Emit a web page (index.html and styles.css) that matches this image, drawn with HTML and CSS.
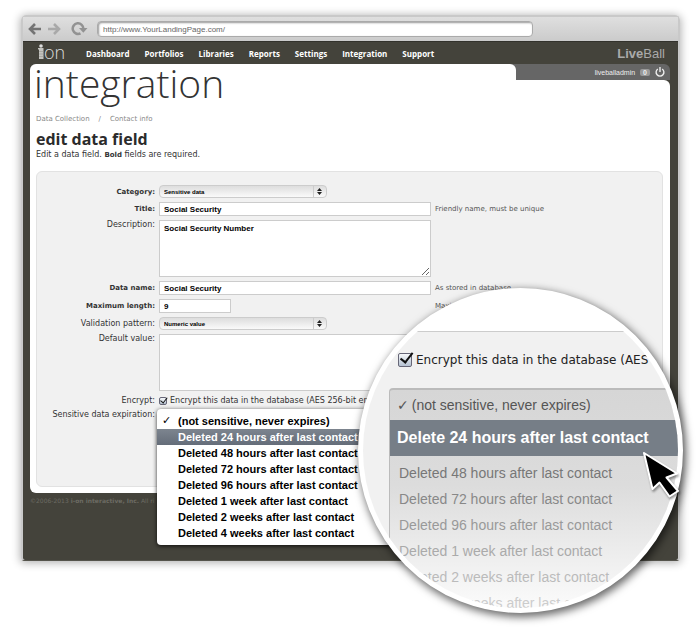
FILE: index.html
```html
<!DOCTYPE html>
<html lang="en">
<head>
<meta charset="utf-8">
<title>integration – edit data field</title>
<link rel="stylesheet" href="styles.css">
</head>
<body>
<div class="window">
  <div class="toolbar">
    <button class="tool" aria-label="Back"><svg width="14" height="12" viewBox="0 0 14 12"><path d="M7 1 2 6l5 5M2.500 6H13" fill="none" stroke="#747474" stroke-width="2.600"/></svg></button>
    <button class="tool" aria-label="Forward"><svg width="14" height="12" viewBox="0 0 14 12"><path d="m7 1 5 5-5 5M11.500 6H1" fill="none" stroke="#a9a9a9" stroke-width="2.600"/></svg></button>
    <button class="tool reload" aria-label="Reload"><svg width="17" height="14" viewBox="0 0 17 14"><path d="M9.500 11.300A5.300 5.300 0 1 1 12.300 7" fill="none" stroke="#929292" stroke-width="2.500"/><path d="M8 6h8.500l-4.200 4.800z" fill="#929292"/></svg></button>
    <input class="address" type="text" aria-label="Address" value="http://www.YourLandingPage.com/">
  </div>
  <div class="app">
    <header class="nav">
      <a class="ion" href="#"><svg width="6" height="15" viewBox="0 0 6 15"><circle cx="3" cy="2" r="1.800" fill="#ddd"/><path d="M0 4h5.500v11H1V5.500H0z" fill="#c4c4c0"/><path d="M1 7.500h4.500M1 10h4.500M1 12.500h4.500" stroke="#99988f" stroke-width=".6"/></svg><span>on</span></a>
      <nav class="links">
        <a href="#">Dashboard</a><a href="#">Portfolios</a><a href="#">Libraries</a><a href="#">Reports</a><a href="#">Settings</a><a href="#">Integration</a><a href="#">Support</a>
      </nav>
      <div class="liveball"><b>Live</b>Ball</div>
    </header>
    <div class="tabs">
      <div class="tab"></div>
      <div class="user">
        <span>liveballadmin</span><span class="count">0</span>
        <button class="tool" aria-label="Log out"><svg width="10" height="10" viewBox="0 0 10 10"><path d="M2.800 2A3.900 3.900 0 1 0 7.200 2M5 0v5" fill="none" stroke="#eee" stroke-width="1.400"/></svg></button>
      </div>
    </div>
    <main class="sheet">
      <h1>integration</h1>
      <p class="crumbs"><a href="#">Data Collection</a><span>/</span><a href="#">Contact info</a></p>
      <h2>edit data field</h2>
      <p class="intro">Edit a data field. <b>Bold</b> fields are required.</p>
      <form class="form">
        <label class="req" for="category">Category:</label>
        <div class="pick"><select id="category"><option>Sensitive data</option></select><svg width="5" height="7" viewBox="0 0 5 7"><path d="M0 3 2.500 0 5 3zM0 4h5L2.500 7z" fill="#222"/></svg></div>
        <span></span>

        <label class="req" for="title">Title:</label>
        <input id="title" type="text" value="Social Security">
        <span class="hint">Friendly name, must be unique</span>

        <label class="top" for="description">Description:</label>
        <textarea id="description" class="resizable">Social Security Number</textarea>
        <span></span>

        <label class="req" for="dataname">Data name:</label>
        <input id="dataname" type="text" value="Social Security">
        <span class="hint">As stored in database</span>

        <label class="req" for="maxlength">Maximum length:</label>
        <input id="maxlength" class="short" type="text" value="9">
        <span class="hint">Maximum</span>

        <label for="pattern">Validation pattern:</label>
        <div class="pick"><select id="pattern"><option>Numeric value</option></select><svg width="5" height="7" viewBox="0 0 5 7"><path d="M0 3 2.500 0 5 3zM0 4h5L2.500 7z" fill="#222"/></svg></div>
        <span></span>

        <label class="top" for="default">Default value:</label>
        <textarea id="default"></textarea>
        <span></span>

        <label for="encrypt">Encrypt:</label>
        <div class="check"><input id="encrypt" type="checkbox" checked><label for="encrypt">Encrypt this data in the database (AES 256-bit encr</label></div>
        <span></span>

        <span class="caption" id="expiration">Sensitive data expiration:</span>
        <div class="anchor">
          <ul class="menu" role="listbox" aria-labelledby="expiration">
            <li role="option" aria-selected="true"><i>✓</i>(not sensitive, never expires)</li>
            <li role="option" class="active">Deleted 24 hours after last contact</li>
            <li role="option">Deleted 48 hours after last contact</li>
            <li role="option">Deleted 72 hours after last contact</li>
            <li role="option">Deleted 96 hours after last contact</li>
            <li role="option">Deleted 1 week after last contact</li>
            <li role="option">Deleted 2 weeks after last contact</li>
            <li role="option">Deleted 4 weeks after last contact</li>
          </ul>
        </div>
      </form>
    </main>
    <footer>©2006-2013 <b>i-on interactive, Inc.</b> All ri</footer>
  </div>

  <div class="lens">
    <div class="lens-body">
      <div class="lens-check"><input id="encrypt-zoom" type="checkbox" checked><label for="encrypt-zoom">Encrypt this data in the database (AES</label></div>
      <ul class="lens-menu" role="listbox" aria-label="Sensitive data expiration, magnified">
        <li role="option" class="first" aria-selected="true"><i>✓</i>(not sensitive, never expires)</li>
        <li role="option" class="active">Delete 24 hours after last contact</li>
        <li role="option">Deleted 48 hours after last contact</li>
        <li role="option">Deleted 72 hours after last contact</li>
        <li role="option">Deleted 96 hours after last contact</li>
        <li role="option">Deleted 1 week after last contact</li>
        <li role="option">Deleted 2 weeks after last contact</li>
        <li role="option">Deleted 4 weeks after last contact</li>
      </ul>
    </div>
  </div>
  <svg class="cursor" width="40" height="50" viewBox="0 0 40 50"><path d="M2 2 35 22.500 24.500 26.500 36 40 27.500 45.500 17.500 31.500 10.500 38z" fill="#000" stroke="#fff" stroke-width="2" stroke-linejoin="round"/></svg>
</div>
</body>
</html>
```
FILE: styles.css
```css
* { box-sizing: border-box; }

body {
  margin: 0;
  padding: 15px 20px 68px 21px;
  background: #fff;
  color: #333;
  font-family: "DejaVu Sans", sans-serif;
  font-size: 7px;
  overflow: hidden;
}

a { color: inherit; text-decoration: none; }
ul { list-style: none; margin: 0; padding: 0; }
h1, h2, p { margin: 0; }
i { font-style: normal; }

.window {
  position: relative;
  border: 2px solid #c9c9c9;
  border-bottom: 1px solid #55544c;
  border-radius: 5px 5px 3px 3px;
  box-shadow: 0 1px 9px 1px rgba(0, 0, 0, .3);
}

.toolbar {
  display: flex;
  align-items: center;
  gap: 5px;
  height: 24px;
  padding: 0 145px 0 5px;
  background: linear-gradient(#dfdfdf, #cbcbcb);
}
.tool {
  display: flex;
  padding: 0;
  border: 0;
  background: none;
}
.reload { margin: 0 4px 0 5px; }
.address {
  flex: 1;
  min-width: 0;
  height: 16px;
  padding: 0 5px;
  border: 1px solid #aaa;
  border-radius: 4px;
  background: #fff;
  box-shadow: inset 1px 1px 2px #999;
  color: #666;
  font: 8px "Liberation Sans", sans-serif;
}

.app {
  padding: 0 8px 0 7px;
  background: #44433b;
  border-top: 1px solid #33322c;
  border-radius: 0 0 2px 2px;
}
.nav {
  display: flex;
  align-items: center;
  height: 22px;
  padding: 2px 5px 0 8px;
  color: #fff;
}
.ion {
  display: flex;
  align-items: flex-start;
  width: 48px;
  height: 20px;
  font: 300 18px/16px "Open Sans", sans-serif;
  color: #ddd;
}
.links {
  display: flex;
  flex: 1;
  gap: 15px;
  font: bold 8px/12px "Open Sans", sans-serif;
}
.liveball {
  color: #aaa;
  font: 13px/14px "Liberation Sans", sans-serif;
}

.tabs {
  display: flex;
  height: 16px;
  border-radius: 6px 6px 0 0;
  background: #666;
}
.tab {
  width: 76%;
  border-radius: 6px 6px 0 0;
  background: #fff;
}
.user {
  display: flex;
  flex: 1;
  align-items: center;
  justify-content: flex-end;
  gap: 5px;
  padding-right: 5px;
  color: #eee;
  font: 7px "Liberation Sans", sans-serif;
}
.count {
  padding: 0 3px;
  border-radius: 2px;
  background: #999;
  font-weight: bold;
}

.sheet {
  display: flow-root;
  padding: 0 7px 6px 6px;
  border-radius: 0 6px 6px 6px;
  background: #fff;
}
h1 {
  height: 49px;
  margin: -16px 0 0 -2px;
  font: 300 39px/38px "Open Sans", sans-serif;
  color: #333;
}
.crumbs {
  display: flex;
  gap: 9px;
  line-height: 12px;
  color: #888;
}
h2 {
  margin-top: 4px;
  font: bold 16px/20px "Open Sans", sans-serif;
  color: #2b2b2b;
}
.intro { font-size: 8px; line-height: 12px; }
.intro b { font-size: 7px; }

.form {
  display: grid;
  grid-template-columns: 118px 272px 1fr;
  gap: 4px;
  align-items: center;
  min-height: 316px;
  align-content: start;
  margin-top: 10px;
  padding: 13px 0 0;
  border: 1px solid #e2e2e2;
  border-radius: 6px;
  background: #f1f1f1;
}
.form > label, .caption {
  text-align: right;
  font-size: 8px;
  line-height: 10px;
  white-space: nowrap;
}
.form > .req { font-size: 7px; font-weight: bold; }
.form > .top { align-self: start; }
.hint { color: #555; }

.form > input, .form textarea {
  display: block;
  width: 100%;
  height: 14px;
  padding: 0 4px;
  border: 1px solid #ccc;
  background: #fff;
  color: #000;
  font: bold 8px/10px "Liberation Sans", sans-serif;
}
.form > .short { width: 72px; }
.form textarea {
  height: 57px;
  padding-top: 3px;
  resize: none;
}
.form .resizable { resize: vertical; }

.pick {
  display: flex;
  align-items: center;
  width: 168px;
  height: 13px;
  padding-right: 4px;
  border: 1px solid #ccc;
  border-radius: 4px;
  background: linear-gradient(#ddd, #fafafa);
}
.pick select {
  flex: 1;
  height: 11px;
  margin-right: 3px;
  padding: 0 4px;
  appearance: none;
  border: 0;
  border-right: 1px solid #ccc;
  background: none;
  color: #000;
  font: bold 6px "Liberation Sans", sans-serif;
}

input[type="checkbox"] {
  appearance: none;
  flex: none;
  width: 8px;
  height: 8px;
  margin: 0;
  border: 1px solid #667;
  border-radius: 2px;
  background: linear-gradient(#f6f8fa, #b5c2d2);
  position: relative;
}
input[type="checkbox"]::after {
  content: "";
  position: absolute;
  left: 30%;
  top: -30%;
  width: 45%;
  height: 95%;
  border: solid #111;
  border-width: 0 1px 1px 0;
  transform: rotate(38deg);
}
.check {
  display: flex;
  align-items: center;
  gap: 3px;
  height: 11px;
  font-size: 8px;
  white-space: nowrap;
}

.anchor { position: relative; height: 10px; }
.menu {
  position: absolute;
  left: -2px;
  top: -1px;
  width: 240px;
  padding: 4px 0;
  border-radius: 4px;
  background: #fff;
  box-shadow: 0 1px 4px rgba(0, 0, 0, .8);
  color: #000;
  font: bold 11px/16px "Liberation Sans", sans-serif;
  white-space: nowrap;
}
.menu li { padding-left: 21px; }
.menu .active {
  background: linear-gradient(#7d858f, #656d79);
  color: #fff;
}
.menu i {
  float: left;
  margin-left: -16px;
  font-family: "DejaVu Sans", sans-serif;
}

footer {
  height: 67px;
  padding-top: 4px;
  color: #6c6b63;
  font-size: 6px;
}

.lens {
  position: absolute;
  right: -5px;
  top: 271px;
  width: 325px;
  height: 325px;
  border: 5px solid #fff;
  border-radius: 50%;
  overflow: hidden;
  background: #fff;
  box-shadow: 2px 3px 9px 1px rgba(0, 0, 0, .6);
}
.lens-body {
  height: 280px;
  margin-top: 38px;
  padding: 20px 0 0 26px;
  border-top: 1px solid #ccc;
  background: linear-gradient(#f1f1f1 70%, #fff);
  white-space: nowrap;
}
.lens-check {
  display: flex;
  align-items: center;
  gap: 4px;
  height: 16px;
  padding-left: 9px;
  color: #222;
  font-size: 12px;
}
.lens-check input[type="checkbox"] { width: 14px; height: 14px; }
.lens-check input[type="checkbox"]::after { border-width: 0 2px 2px 0; }
.lens-menu {
  height: 240px;
  margin-top: 20px;
  border-top: 2px solid #bbb;
  border-left: 1px solid #bbb;
  border-radius: 4px 0 0 0;
  background: linear-gradient(#d6d6d6, #dcdcdc 40%, #fafafa 90%);
  font: 14px/26px "Liberation Sans", sans-serif;
}
.lens-menu li { padding-left: 9px; }
.lens-menu .first {
  padding-left: 7px;
  line-height: 30px;
  color: #555;
}
.lens-menu i { font-family: "DejaVu Sans", sans-serif; margin-right: 3px; }
.lens-menu .active {
  margin-bottom: 4px;
  padding-left: 7px;
  background: #767e87;
  color: #fff;
  font-weight: bold;
  font-size: 16px;
  line-height: 36px;
}
.lens-menu li:nth-child(3) { color: #777; }
.lens-menu li:nth-child(4) { color: #888; }
.lens-menu li:nth-child(5) { color: #999; }
.lens-menu li:nth-child(6) { color: #aaa; }
.lens-menu li:nth-child(7) { color: #bbb; }
.lens-menu li:nth-child(8) { color: #ccc; }

.cursor {
  position: absolute;
  right: -4px;
  top: 434px;
  filter: drop-shadow(1px 2px 1px rgba(0, 0, 0, .4));
}
```
